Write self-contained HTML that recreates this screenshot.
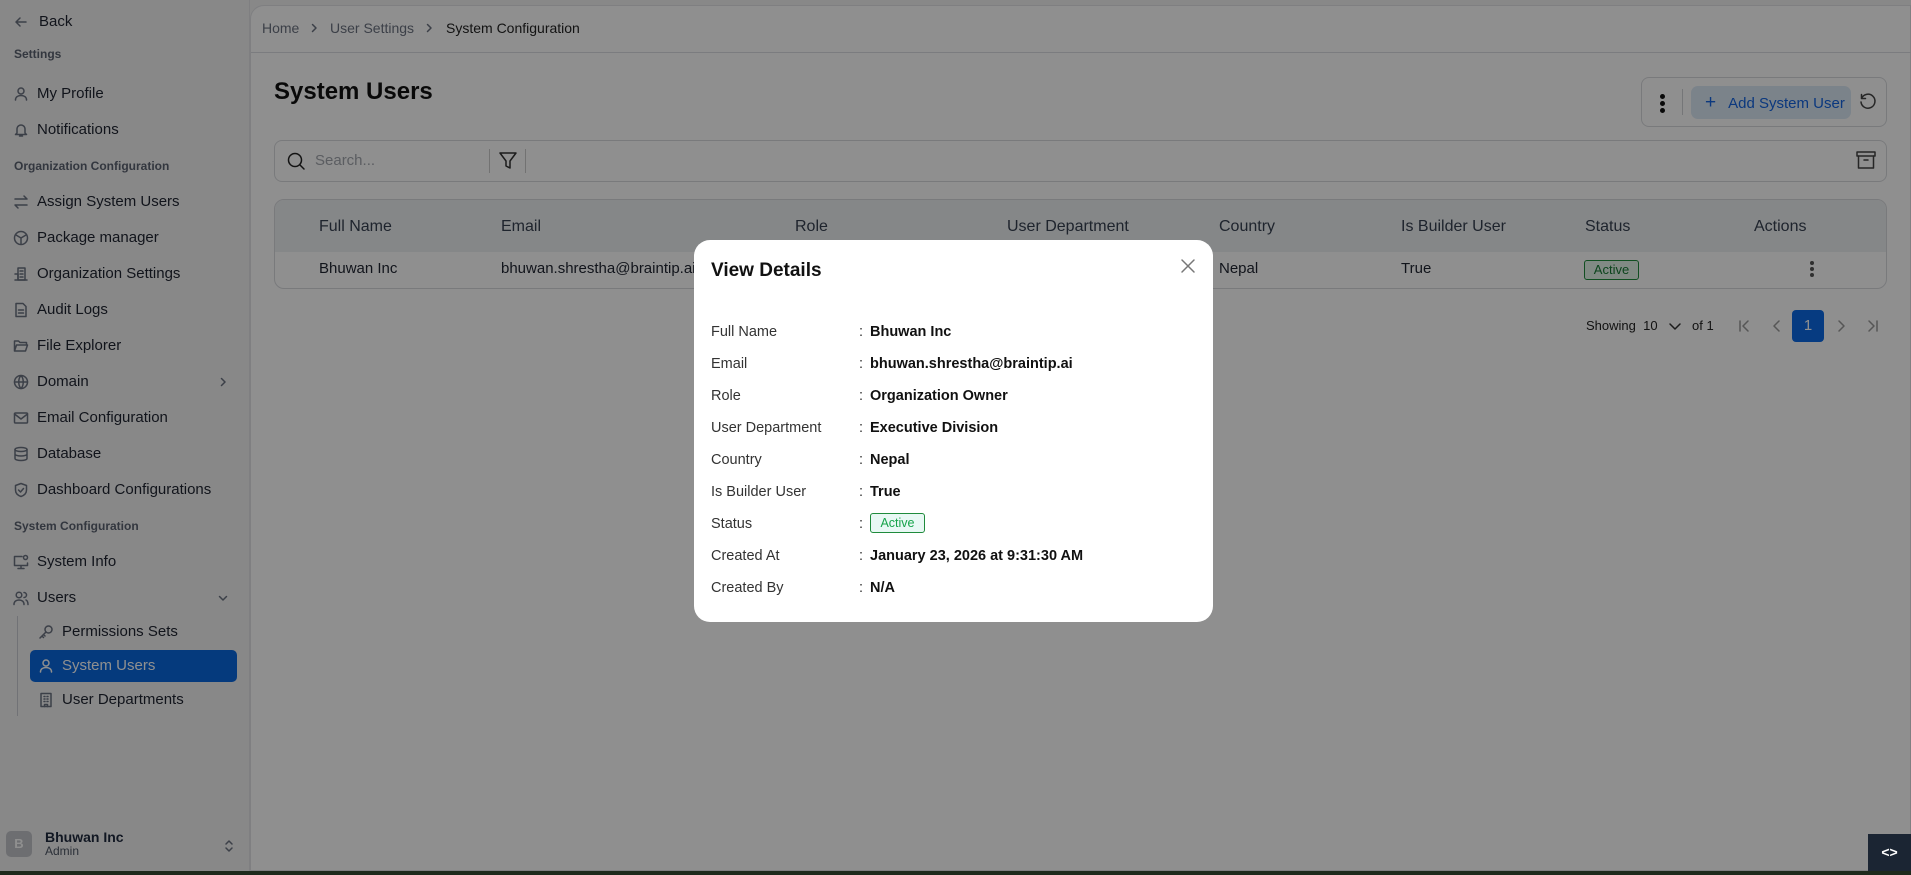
<!DOCTYPE html>
<html><head><meta charset="utf-8"><style>
*{box-sizing:border-box;margin:0;padding:0}
body{width:1911px;height:875px;overflow:hidden;font-family:"Liberation Sans",sans-serif;background:#f2f2f3;position:relative;color:#111}
.abs{position:absolute}
.sb{position:absolute;left:0;top:0;width:250px;height:871px;background:#f2f2f3;border-right:1px solid #e2e3e6}
.it{position:absolute;left:37px;font-size:15px;color:#1f2430;line-height:18px;transform:translateY(-9px)}
.lb{position:absolute;left:14px;font-size:12px;font-weight:bold;color:#5b6270;transform:translateY(-7px)}
.ic{position:absolute;left:13px;width:16px;height:16px;transform:translateY(-8px)}
svg{stroke:#6b7280;fill:none;stroke-width:1.5;stroke-linecap:round;stroke-linejoin:round}
.main{position:absolute;left:250px;top:5px;width:1661px;height:866px;background:#fff;border-top-left-radius:14px;border:1px solid #e2e3e6}
.th{position:absolute;font-size:16px;color:#374151;top:218px}
.td{position:absolute;font-size:15px;color:#1f2430;top:260px}
.ov{position:absolute;left:0;top:0;width:1911px;height:871px;background:rgba(0,0,0,.44)}
.modal{position:absolute;left:694px;top:240px;width:519px;height:382px;background:#fff;border-radius:16px}
.ml{position:absolute;left:17px;font-size:14.5px;color:#333;transform:translateY(-7px)}
.mc{position:absolute;left:165px;font-size:14.5px;color:#333;transform:translateY(-7px)}
.mv{position:absolute;left:176px;font-size:14.5px;font-weight:bold;color:#111;transform:translateY(-7px)}
</style></head><body>
<div class="sb">
 <svg class="ic" style="top:22px" viewBox="0 0 16 16"><path d="M13 8H3M7 4L3 8l4 4"/></svg>
 <div class="it" style="top:22px;left:39px">Back</div>
 <div class="lb" style="top:54px">Settings</div>
 <svg class="ic" style="top:94px" viewBox="0 0 16 16"><circle cx="8" cy="5" r="3"/><path d="M2.5 14c0-3 2.5-4.5 5.5-4.5s5.5 1.5 5.5 4.5"/></svg>
 <div class="it" style="top:94px">My Profile</div>
 <svg class="ic" style="top:130px" viewBox="0 0 16 16"><path d="M4 11V7a4 4 0 018 0v4l1.5 1.5h-11zM6.5 14h3"/></svg>
 <div class="it" style="top:130px">Notifications</div>
 <div class="lb" style="top:166px">Organization Configuration</div>
 <svg class="ic" style="top:202px" viewBox="0 0 16 16"><path d="M2 5h12l-3-3M14 11H2l3 3"/></svg>
 <div class="it" style="top:202px">Assign System Users</div>
 <svg class="ic" style="top:238px" viewBox="0 0 16 16"><circle cx="8" cy="8" r="6.5"/><path d="M3 5l5 3 5-3M8 8v6"/></svg>
 <div class="it" style="top:238px">Package manager</div>
 <svg class="ic" style="top:274px" viewBox="0 0 16 16"><rect x="5" y="2" width="7" height="12"/><path d="M2 14h12M2 8h3v6M7 5h3M7 8h3M7 11h3"/></svg>
 <div class="it" style="top:274px">Organization Settings</div>
 <svg class="ic" style="top:310px" viewBox="0 0 16 16"><path d="M3 1.5h7l3 3v10H3zM5.5 8h5M5.5 11h5"/></svg>
 <div class="it" style="top:310px">Audit Logs</div>
 <svg class="ic" style="top:346px" viewBox="0 0 16 16"><path d="M1.5 13V3h4l1.5 1.5h6.5V7M1.5 13l2-6h11l-2 6z"/></svg>
 <div class="it" style="top:346px">File Explorer</div>
 <svg class="ic" style="top:382px" viewBox="0 0 16 16"><circle cx="8" cy="8" r="6.5"/><path d="M1.5 8h13M8 1.5c-3 3-3 10 0 13M8 1.5c3 3 3 10 0 13"/></svg>
 <div class="it" style="top:382px">Domain</div>
 <svg class="ic" style="top:382px;left:217px;width:12px;height:12px;transform:translateY(-6px)" viewBox="0 0 12 12"><path d="M4.5 2.5L8 6l-3.5 3.5"/></svg>
 <svg class="ic" style="top:418px" viewBox="0 0 16 16"><rect x="1.5" y="3" width="13" height="10" rx="1"/><path d="M1.5 4l6.5 5 6.5-5"/></svg>
 <div class="it" style="top:418px">Email Configuration</div>
 <svg class="ic" style="top:454px" viewBox="0 0 16 16"><ellipse cx="8" cy="3.5" rx="6" ry="2"/><path d="M2 3.5v9c0 1.1 2.7 2 6 2s6-.9 6-2v-9M2 8c0 1.1 2.7 2 6 2s6-.9 6-2"/></svg>
 <div class="it" style="top:454px">Database</div>
 <svg class="ic" style="top:490px" viewBox="0 0 16 16"><path d="M8 1.5l5.5 2v4.5c0 3.5-2.5 5.5-5.5 6.5-3-1-5.5-3-5.5-6.5V3.5zM5.5 8l2 2 3-3.5"/></svg>
 <div class="it" style="top:490px">Dashboard Configurations</div>
 <div class="lb" style="top:526px">System Configuration</div>
 <svg class="ic" style="top:562px" viewBox="0 0 16 16"><path d="M9 2.5H1.5v9h13V9M8 11.5v3M5 14.5h6"/><circle cx="12.5" cy="3.5" r="2"/></svg>
 <div class="it" style="top:562px">System Info</div>
 <svg class="ic" style="top:598px" viewBox="0 0 16 16"><circle cx="6" cy="5" r="2.8"/><path d="M1 14.5c0-3 2.2-4.5 5-4.5s5 1.5 5 4.5M11 2.5a2.5 2.5 0 010 5M13 10c1.3.6 2 2 2 4.5"/></svg>
 <div class="it" style="top:598px">Users</div>
 <svg class="ic" style="top:598px;left:217px;width:12px;height:12px;transform:translateY(-6px)" viewBox="0 0 12 12"><path d="M2.5 4.5L6 8l3.5-3.5"/></svg>
 <div class="abs" style="left:17px;top:616px;width:1px;height:100px;background:#c9ccd2"></div>
 <svg class="ic" style="top:632px;left:38px" viewBox="0 0 16 16"><circle cx="10.5" cy="5.5" r="3.5"/><path d="M8 8l-6 6M4 12l1.5 1.5M5.5 10.5l1.5 1.5"/></svg>
 <div class="it" style="top:632px;left:62px">Permissions Sets</div>
 <div class="abs" style="left:30px;top:650px;width:207px;height:32px;background:#0a68df;border-radius:5px"></div>
 <svg class="ic" style="top:666px;left:38px;stroke:#fff" viewBox="0 0 16 16"><circle cx="8" cy="5" r="3"/><path d="M2.5 14c0-3 2.5-4.5 5.5-4.5s5.5 1.5 5.5 4.5"/></svg>
 <div class="it" style="top:666px;left:62px;color:#fff">System Users</div>
 <svg class="ic" style="top:700px;left:38px" viewBox="0 0 16 16"><rect x="3" y="1.5" width="10" height="13"/><path d="M6 4.5h1M9 4.5h1M6 7h1M9 7h1M6 9.5h1M9 9.5h1M6.5 14.5v-2h3v2"/></svg>
 <div class="it" style="top:700px;left:62px">User Departments</div>
 <div class="abs" style="left:6px;top:831px;width:26px;height:26px;border-radius:5px;background:#c2c4c9;color:#fff;font-weight:bold;font-size:13px;text-align:center;line-height:26px">B</div>
 <div class="abs" style="left:45px;top:829px;font-size:14px;font-weight:bold;color:#1f2a3d">Bhuwan Inc</div>
 <div class="abs" style="left:45px;top:844px;font-size:12px;color:#4b5563">Admin</div>
 <svg class="ic" style="top:846px;left:223px;width:12px;height:14px;transform:translateY(-7px)" viewBox="0 0 12 14"><path d="M3 5l3-3 3 3M3 9l3 3 3-3"/></svg>
</div>
<div class="main"></div>
<div class="abs" style="left:251px;top:52px;width:1660px;height:1px;background:#dcdee2"></div>
<div class="abs" style="left:262px;top:20px;font-size:14px;color:#6b7280">Home</div>
<svg class="abs" style="left:308px;top:22px" width="12" height="12" viewBox="0 0 12 12"><path d="M4.5 2.5L8 6l-3.5 3.5"/></svg>
<div class="abs" style="left:330px;top:20px;font-size:14px;color:#6b7280">User Settings</div>
<svg class="abs" style="left:423px;top:22px" width="12" height="12" viewBox="0 0 12 12"><path d="M4.5 2.5L8 6l-3.5 3.5"/></svg>
<div class="abs" style="left:446px;top:20px;font-size:14px;color:#222">System Configuration</div>
<div class="abs" style="left:274px;top:78px;font-size:24px;font-weight:bold;color:#111">System Users</div>
<div class="abs" style="left:1641px;top:77px;width:246px;height:50px;border:1px solid #d8dade;border-radius:8px"></div>
<div class="abs" style="left:1660px;top:94px;width:5px;height:5px;border-radius:50%;background:#111;box-shadow:0 7px 0 #111,0 14px 0 #111"></div>
<div class="abs" style="left:1682px;top:89px;width:1px;height:26px;background:#d0d2d6"></div>
<div class="abs" style="left:1691px;top:86px;width:160px;height:33px;background:#dbe9f7;border-radius:7px;color:#1565e0;font-size:15px;line-height:33px;padding-left:14px"><span style="font-size:19px;margin-right:12px">+</span>Add System User</div>
<svg class="abs" style="left:1858px;top:92px" width="20" height="20" viewBox="0 0 20 20"><path d="M3.5 6.5A7 7 0 1 1 3 10M3.5 2.5v4h4" stroke="#444"/></svg>
<div class="abs" style="left:274px;top:140px;width:1613px;height:42px;border:1px solid #d8dade;border-radius:8px"></div>
<svg class="abs" style="left:286px;top:151px" width="20" height="20" viewBox="0 0 20 20"><circle cx="9" cy="9" r="6.5" stroke="#222"/><path d="M14 14l4 4" stroke="#222"/></svg>
<div class="abs" style="left:315px;top:152px;font-size:15px;color:#a3a7ae">Search...</div>
<div class="abs" style="left:489px;top:149px;width:1px;height:24px;background:#ccc"></div>
<svg class="abs" style="left:498px;top:150px" width="20" height="22" viewBox="0 0 20 22"><path d="M2 3h16l-6 8v7l-4-2v-5z" stroke="#333"/></svg>
<div class="abs" style="left:525px;top:149px;width:1px;height:24px;background:#ccc"></div>
<svg class="abs" style="left:1855px;top:150px" width="22" height="20" viewBox="0 0 22 20"><rect x="2" y="2" width="18" height="4" stroke="#444"/><path d="M3.5 6v12h15V6M9 10h4" stroke="#444"/></svg>
<div class="abs" style="left:274px;top:199px;width:1613px;height:90px;border:1px solid #d8dade;border-radius:10px;overflow:hidden"><div style="height:52px;background:#eef0f3"></div></div>
<div class="th" style="left:319px">Full Name</div><div class="th" style="left:501px">Email</div><div class="th" style="left:795px">Role</div><div class="th" style="left:1007px">User Department</div><div class="th" style="left:1219px">Country</div><div class="th" style="left:1401px">Is Builder User</div><div class="th" style="left:1585px">Status</div><div class="th" style="left:1754px">Actions</div>
<div class="td" style="left:319px">Bhuwan Inc</div><div class="td" style="left:501px">bhuwan.shrestha@braintip.ai</div><div class="td" style="left:1219px">Nepal</div><div class="td" style="left:1401px">True</div>
<div class="abs" style="left:1584px;top:260px;width:55px;height:20px;border:1px solid #1f8b3c;border-radius:3px;background:#e6f6ec;color:#167a33;font-size:13px;text-align:center;line-height:18px">Active</div>
<div class="abs" style="left:1810px;top:261px;width:4px;height:4px;border-radius:50%;background:#555;box-shadow:0 6px 0 #555,0 12px 0 #555"></div>
<div class="abs" style="left:1586px;top:318px;font-size:13px;color:#222">Showing&nbsp; 10</div>
<svg class="abs" style="left:1668px;top:320px" width="14" height="12" viewBox="0 0 14 12"><path d="M2 4l5 5 5-5" stroke="#333"/></svg>
<div class="abs" style="left:1692px;top:318px;font-size:13px;color:#222">of 1</div>
<svg class="abs" style="left:1737px;top:319px" width="14" height="14" viewBox="0 0 14 14"><path d="M3 2v10M11 2L6 7l5 5" stroke="#999"/></svg>
<svg class="abs" style="left:1770px;top:319px" width="14" height="14" viewBox="0 0 14 14"><path d="M9 2L4 7l5 5" stroke="#999"/></svg>
<div class="abs" style="left:1792px;top:310px;width:32px;height:32px;background:#0b69e6;border-radius:4px;color:#fff;font-size:15px;text-align:center;line-height:32px">1</div>
<svg class="abs" style="left:1834px;top:319px" width="14" height="14" viewBox="0 0 14 14"><path d="M5 2l5 5-5 5" stroke="#999"/></svg>
<svg class="abs" style="left:1866px;top:319px" width="14" height="14" viewBox="0 0 14 14"><path d="M3 2l5 5-5 5M11 2v10" stroke="#999"/></svg>
<div class="ov"></div>
<div class="abs" style="left:0;top:871px;width:1911px;height:4px;background:#1e2a1c"></div>
<div class="modal">
 <div class="abs" style="left:17px;top:20px;font-size:19px;font-weight:bold;color:#111">View Details</div>
 <svg class="abs" style="left:486px;top:18px" width="16" height="16" viewBox="0 0 16 16"><path d="M2 2l12 12M14 2L2 14" stroke="#777"/></svg>
 <div class="ml" style="top:91px">Full Name</div><div class="mc" style="top:91px">:</div><div class="mv" style="top:91px">Bhuwan Inc</div>
 <div class="ml" style="top:123px">Email</div><div class="mc" style="top:123px">:</div><div class="mv" style="top:123px">bhuwan.shrestha@braintip.ai</div>
 <div class="ml" style="top:155px">Role</div><div class="mc" style="top:155px">:</div><div class="mv" style="top:155px">Organization Owner</div>
 <div class="ml" style="top:187px">User Department</div><div class="mc" style="top:187px">:</div><div class="mv" style="top:187px">Executive Division</div>
 <div class="ml" style="top:219px">Country</div><div class="mc" style="top:219px">:</div><div class="mv" style="top:219px">Nepal</div>
 <div class="ml" style="top:251px">Is Builder User</div><div class="mc" style="top:251px">:</div><div class="mv" style="top:251px">True</div>
 <div class="ml" style="top:283px">Status</div><div class="mc" style="top:283px">:</div>
 <div class="abs" style="left:176px;top:273px;width:55px;height:20px;border:1px solid #1f8b3c;border-radius:3px;background:#e8f8f4;color:#16a34a;font-size:12.5px;text-align:center;line-height:18px">Active</div>
 <div class="ml" style="top:315px">Created At</div><div class="mc" style="top:315px">:</div><div class="mv" style="top:315px">January 23, 2026 at 9:31:30 AM</div>
 <div class="ml" style="top:347px">Created By</div><div class="mc" style="top:347px">:</div><div class="mv" style="top:347px">N/A</div>
</div>
<div class="abs" style="left:1868px;top:834px;width:43px;height:37px;background:#1b2533;color:#fff;font-size:14px;font-weight:bold;text-align:center;line-height:37px">&lt;&gt;</div>
</body></html>
